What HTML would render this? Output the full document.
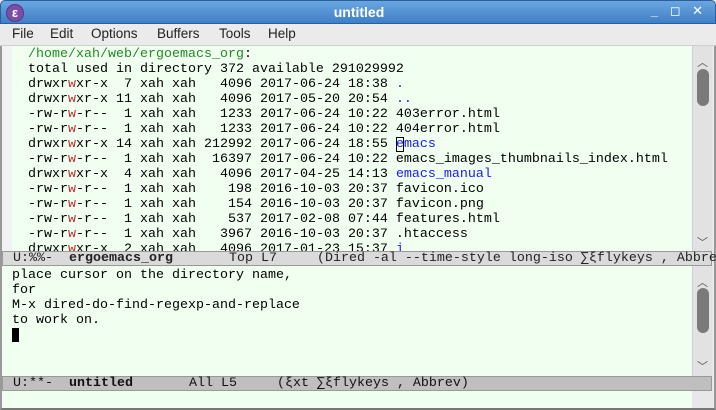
<!DOCTYPE html>
<html><head><style>
*{margin:0;padding:0;box-sizing:border-box}
body{width:716px;height:410px;overflow:hidden;background:#e8e8e8;position:relative;font-family:"Liberation Sans","DejaVu Sans",sans-serif}
.title{position:absolute;left:0;top:0;width:716px;height:24px;background:linear-gradient(#6aa6e0,#3f7fc6);border-radius:5px 5px 0 0;border:1px solid #2c5f99}
.title .t{position:absolute;left:0;width:716px;top:3px;text-align:center;color:#fff;font-weight:bold;font-size:14px}
.logo{position:absolute;left:5px;top:3px;width:18px;height:18px;border-radius:50%;background:#7b4fa8;border:1px solid #5a3585;color:#fff;font-size:13px;line-height:16px;text-align:center;font-weight:bold}
.btns{position:absolute;right:8px;top:2px;color:#fff;font-size:13px;font-weight:bold;letter-spacing:4px}
.menu{position:absolute;left:0;top:24px;width:716px;height:22px;background:#ebebeb;border-bottom:1px solid #cfcfcf;font-size:13.5px;color:#222}
.menu span{position:absolute;top:2px}
.frame{position:absolute;left:0;top:46px;width:716px;height:364px;border-left:2px solid #999;border-right:2px solid #999;border-bottom:2px solid #777}
.win{position:absolute;background:#f0fff0;font-family:"Liberation Mono","DejaVu Sans Mono",monospace;font-size:13.33px;line-height:15px;white-space:pre;color:#000}
.fr{position:absolute;background:#f2f2f2}
.ml{position:absolute;left:2px;width:710px;height:15px;font-family:"Liberation Mono",monospace;font-size:13.33px;line-height:14px;white-space:pre;border:1px solid #999;padding-left:2px}
.sb{position:absolute;left:692px;width:20px;background:#e2e2e2;border-left:1px solid #d0d0d0}
.thumb{position:absolute;left:4px;width:12px;background:#7a7a7a;border-radius:6px}
.arr{position:absolute;left:4px;color:#555;font-size:11px}
.r{color:#c03030}.b{color:#1a1aff}.g{color:#228b22}
</style></head><body>
<div class="title"><div class="logo">ε</div><div class="t">untitled</div><div class="btns">_ ◻ ✕</div></div>
<div class="menu"><span style="left:12px">File</span><span style="left:50px">Edit</span><span style="left:91px">Options</span><span style="left:157px">Buffers</span><span style="left:219px">Tools</span><span style="left:268px">Help</span></div>
<div class="frame"></div>
<div class="fr" style="left:2px;top:46px;width:10px;height:205px"></div>
<div class="win" style="left:12px;top:46px;width:680px;height:205px;padding-top:1px"><span class="g">  /home/xah/web/ergoemacs_org</span>:
  total used in directory 372 available 291029992
  drwxr<span class="r">w</span>xr-x  7 xah xah   4096 2017-06-24 18:38 <span class="b">.</span>
  drwxr<span class="r">w</span>xr-x 11 xah xah   4096 2017-05-20 20:54 <span class="b">..</span>
  -rw-r<span class="r">w</span>-r--  1 xah xah   1233 2017-06-24 10:22 403error.html
  -rw-r<span class="r">w</span>-r--  1 xah xah   1233 2017-06-24 10:22 404error.html
  drwxr<span class="r">w</span>xr-x 14 xah xah 212992 2017-06-24 18:55 <span class="b" style="outline:1px solid #000;outline-offset:-1px">e</span><span class="b">macs</span>
  -rw-r<span class="r">w</span>-r--  1 xah xah  16397 2017-06-24 10:22 emacs_images_thumbnails_index.html
  drwxr<span class="r">w</span>xr-x  4 xah xah   4096 2017-04-25 14:13 <span class="b">emacs_manual</span>
  -rw-r<span class="r">w</span>-r--  1 xah xah    198 2016-10-03 20:37 favicon.ico
  -rw-r<span class="r">w</span>-r--  1 xah xah    154 2016-10-03 20:37 favicon.png
  -rw-r<span class="r">w</span>-r--  1 xah xah    537 2017-02-08 07:44 features.html
  -rw-r<span class="r">w</span>-r--  1 xah xah   3967 2016-10-03 20:37 .htaccess
  drwxr<span class="r">w</span>xr-x  2 xah xah   4096 2017-01-23 15:37 <span class="b">i</span></div>
<div class="sb" style="top:46px;height:205px"><span class="arr" style="top:8px">︿</span><div class="thumb" style="top:23px;height:37px"></div><span class="arr" style="top:188px">﹀</span></div>
<div class="ml" style="top:251px;background:#dadada;color:#222"> U:%%-  <b>ergoemacs_org</b>       Top L7     (Dired -al --time-style long-iso ∑ξflykeys , Abbrev</div>
<div class="win" style="left:2px;top:266px;width:690px;height:110px;padding-left:10px;padding-top:2px">place cursor on the directory name,
for
M-x dired-do-find-regexp-and-replace
to work on.
<span style="display:inline-block;width:7px;height:14px;background:#000;vertical-align:-3px"></span></div>
<div class="sb" style="top:266px;height:110px"><span class="arr" style="top:8px">︿</span><div class="thumb" style="top:22px;height:45px"></div><span class="arr" style="top:92px">﹀</span></div>
<div class="ml" style="top:376px;background:#bfbfbf;color:#111"> U:**-  <b>untitled</b>       All L5     (ξxt ∑ξflykeys , Abbrev)</div>
<div class="win" style="left:2px;top:391px;width:690px;height:17px"></div>
</body></html>
